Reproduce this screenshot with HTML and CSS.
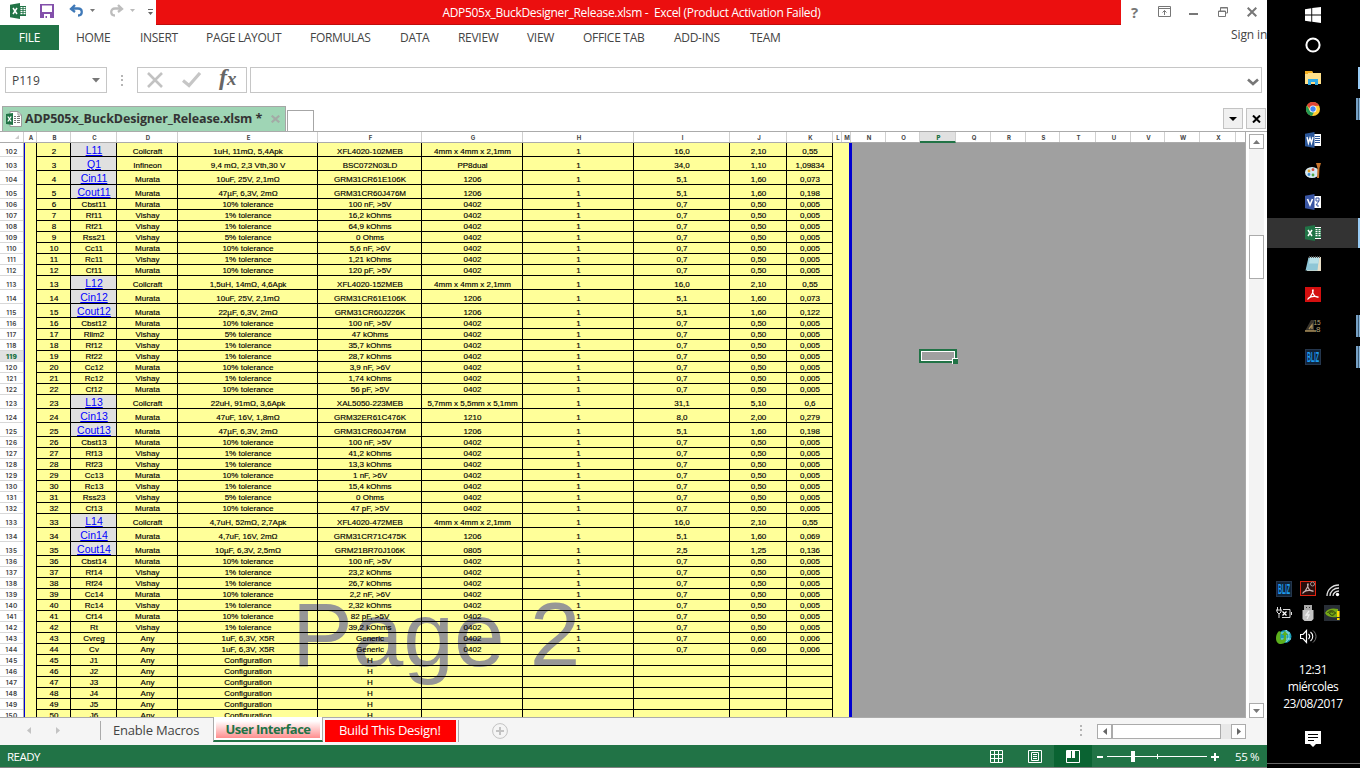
FILE: index.html
```html
<!DOCTYPE html>
<html lang="es">
<head>
<meta charset="utf-8">
<title>ADP505x_BuckDesigner_Release.xlsm - Excel</title>
<link rel="stylesheet" href="styles.css">
</head>
<body>
<svg class="defs" width="0" height="0">
  <defs>
    <symbol id="excel" viewBox="0 0 16 16"><rect x="9" y="2" width="7" height="12" fill="#fff"/><path d="M10 3h6v10h-6z" fill="#217346"/><path d="M10.500 4h2v1.200h-2zm3 0h2v1.200h-2zm-3 2h2v1.200h-2zm3 0h2v1.200h-2zm-3 2h2v1.200h-2zm3 0h2v1.200h-2zm-3 2h2v1.200h-2zm3 0h2v1.200h-2z" fill="#fff"/><path d="M0 1.800 10 0v16L0 14.200z" fill="#217346"/><path d="M3 5l4 6M7 5l-4 6" stroke="#fff" stroke-width="1.500"/></symbol>
    <symbol id="bliz" viewBox="0 0 16 16"><rect x=".5" y=".5" width="15" height="15" fill="#102338" stroke="#24364d"/><text x="2" y="13" textLength="12" lengthAdjust="spacingAndGlyphs" font-family="Liberation Sans" font-size="14" font-weight="bold" fill="#1e9cf0">BLIZ</text></symbol>
    <symbol id="pdf" viewBox="0 0 16 16"><path d="M7.500 2.500c2 0-1 7.500-5 10M7.500 3c0 5 3 7 6 7.500M3 11.500c3-2.500 7-2.500 10.500-1.500" fill="none" stroke="currentColor" stroke-width="1.200"/></symbol>
  </defs>
</svg>
<main class="excel">
  <header class="titlebar">
    <div class="quick">
      <svg class="q-logo" width="16" height="16"><use href="#excel"/></svg>
      <svg class="q-save" width="14" height="14" viewBox="0 0 14 14"><path fill="#8350ab" fill-rule="evenodd" d="M0 0h14v14H0zM2 1.500V8h10V1.500zM4 10v4h1.500v-2H7v2h3v-4z"/></svg>
      <svg class="q-undo" width="15" height="13" viewBox="0 0 15 13"><path d="M6 1 2 5l4 3M2 4.500h7c5 0 5 7 0 7" fill="none" stroke="#3f79b8" stroke-width="2.300"/></svg>
      <svg class="q-down" width="5" height="3" viewBox="0 0 5 3"><path d="M0 0h5L2.500 3z" fill="#777"/></svg>
      <svg class="q-redo" width="15" height="13" viewBox="0 0 15 13"><path d="M9 1l4 4-4 3M13 4.500H6c-5 0-5 7 0 7" fill="none" stroke="#bdbdbd" stroke-width="2.300"/></svg>
      <svg class="q-down" width="5" height="3" viewBox="0 0 5 3"><path d="M0 0h5L2.500 3z" fill="#bbb"/></svg>
      <svg class="q-more" width="5" height="6" viewBox="0 0 5 6"><path d="M0 0h5v1H0zM0 3h5L2.500 6z" fill="#666"/></svg>
    </div>
    <div class="title">ADP505x_BuckDesigner_Release.xlsm -&nbsp; Excel (Product Activation Failed)</div>
    <div class="winbtns">
      <b>?</b>
      <svg width="13" height="11" viewBox="0 0 13 11"><path d="M.5.500h12v10H.5zM.5 2.500h12M6.500 9V4.500M4.500 6.500l2-2 2 2" fill="none" stroke="#777"/></svg>
      <svg width="10" height="11" viewBox="0 0 10 11"><path d="M0 7h9v2H0z" fill="#777"/></svg>
      <svg width="10" height="10" viewBox="0 0 10 10"><path d="M.5 4h7v5.500h-7zM.5 4.500h7M2.500 4V.500h7v5.500h-2M2.500 1h7" fill="none" stroke="#777"/></svg>
      <svg width="10" height="10" viewBox="0 0 10 10"><path d="M.7.700l8.600 8.600M9.300.700L.7 9.300" stroke="#777" stroke-width="2"/></svg>
    </div>
  </header>
  <nav class="ribbon">
    <span class="file">FILE</span>
    <span>HOME</span><span>INSERT</span><span>PAGE LAYOUT</span><span>FORMULAS</span><span>DATA</span><span>REVIEW</span><span>VIEW</span><span>OFFICE TAB</span><span>ADD-INS</span><span>TEAM</span>
    <span class="signin">Sign in</span>
  </nav>
  <section class="formula">
    <div class="namebox"><span>P119</span><svg width="8" height="5" viewBox="0 0 8 5"><path d="M0 0h8L4 4.500z" fill="#777"/></svg></div>
    <i class="dots"></i>
    <div class="fx">
      <svg width="17" height="16" viewBox="0 0 17 16"><path d="M1 1l14 14M15 1L1 15" stroke="#c2c2c2" stroke-width="2.600"/></svg>
      <svg width="20" height="16" viewBox="0 0 20 16"><path d="M1 8.500l6 5L18 1" fill="none" stroke="#c6c6c6" stroke-width="3.200"/></svg>
      <em>f<small>x</small></em>
    </div>
    <div class="input"><svg width="12" height="8" viewBox="0 0 12 8"><path d="M1 1.500l5 4.500 5-4.500" fill="none" stroke="#777" stroke-width="2.600"/></svg></div>
  </section>
  <section class="doctabs">
    <div class="doctab">
      <svg width="16" height="16" viewBox="0 0 16 16"><path d="M4 .500h8l3.500 3.500v11.500H4z" fill="#fff" stroke="#999"/><path d="M12 .500V4h3.500" fill="none" stroke="#999"/><path d="M8 5h2v1H8zm3 0h3v1h-3zM8 7h2v1H8zm3 0h3v1h-3zM8 9h2v1H8zm3 0h3v1h-3zM8 11h2v1H8zm3 0h3v1h-3z" fill="#777"/><path d="M0 3l7-1v12l-7-1z" fill="#217346"/><path d="M1.800 5.500l3.400 5M5.200 5.500l-3.400 5" stroke="#fff" stroke-width="1.300"/></svg>
      <b>ADP505x_BuckDesigner_Release.xlsm *</b>
      <svg class="close" width="9" height="8" viewBox="0 0 9 8"><path d="M.7.700l7.600 6.600M8.300.700L.7 7.300" stroke="#a3aba6" stroke-width="2.200"/></svg>
    </div>
    <div class="newtab"></div>
    <div class="docbtn first"><svg width="8" height="4" viewBox="0 0 8 4"><path d="M0 0h8L4 4z"/></svg></div>
    <div class="docbtn"><svg width="9" height="8" viewBox="0 0 9 8"><path d="M1 .500l7 7M8 .500l-7 7" stroke="#000" stroke-width="2"/></svg></div>
  </section>
  <section class="sheet">
    <div class="pane">
      <div class="colheads" id="colheads"></div>
      <div class="body">
        <div class="rowheads" id="rowheads"></div>
        <div class="yellow">
          <div class="watermark">Page 2</div>
          <div class="rows" id="rows"></div>
        </div>
        <div class="gray"><i class="cursor"></i></div>
      </div>
    </div>
    <div class="vscroll">
      <div class="sbtn"><svg width="7" height="4" viewBox="0 0 7 4"><path d="M0 4h7L3.500 0z" fill="#777"/></svg></div>
      <div class="vthumb"></div>
      <div class="sbtn end"><svg width="7" height="4" viewBox="0 0 7 4"><path d="M0 0h7L3.500 4z" fill="#777"/></svg></div>
    </div>
  </section>
  <footer class="tabs">
    <div class="tabnav">
      <svg width="4" height="7" viewBox="0 0 4 7"><path d="M4 0v7L0 3.500z" fill="#c3c3c3"/></svg>
      <svg width="4" height="7" viewBox="0 0 4 7"><path d="M0 0v7l4-3.500z" fill="#c3c3c3"/></svg>
    </div>
    <div class="tab-plain">Enable Macros</div>
    <div class="tab-active"><b>User Interface</b></div>
    <div class="tab-red">Build This Design!</div>
    <svg class="plus" width="16" height="16" viewBox="0 0 16 16"><circle cx="8" cy="8" r="7.400" fill="none" stroke="#c3c3c3"/><path d="M8 4v8M4 8h8" stroke="#c3c3c3" stroke-width="2"/></svg>
    <i class="dots hdots"></i>
    <div class="hscroll">
      <div class="sbtn"><svg width="4" height="7" viewBox="0 0 4 7"><path d="M4 0v7L0 3.500z" fill="#666"/></svg></div>
      <div class="hthumb"></div>
      <div class="sbtn end"><svg width="4" height="7" viewBox="0 0 4 7"><path d="M0 0v7l4-3.500z" fill="#666"/></svg></div>
    </div>
  </footer>
  <footer class="status">
    <span class="ready">READY</span>
    <svg class="v1" width="13" height="13" viewBox="0 0 13 13"><path d="M.5.500h12v12H.5zM4.500 0v13M8.500 0v13M0 4.500h13M0 8.500h13" fill="none" stroke="#fff"/></svg>
    <svg class="v2" width="14" height="13" viewBox="0 0 14 13"><path d="M.5.500h13v12H.5zM3.500 2.500h7v8h-7zM5 4.500h4M5 6.500h4M5 8.500h4" fill="none" stroke="#fff"/></svg>
    <div class="v3"><svg width="14" height="13" viewBox="0 0 14 13"><path d="M.5.500h13v12H.5z" fill="none" stroke="#fff"/><path d="M1 0h4v8H1zM6 0h3v8H6z" fill="#fff"/></svg></div>
    <svg class="zoombar" width="123" height="13" viewBox="0 0 123 13"><path d="M0 6h6v2H0zM10 6h100v1H10zM34 1h4v11h-4zM60 4h1v5h-1zM114 6h8v2h-8zM117 3h2v8h-2z" fill="#fff"/></svg>
    <span class="pct">55 %</span>
  </footer>
</main>
<aside class="taskbar">
  <div class="slot"><svg width="16" height="16" viewBox="0 0 16 16"><path d="M0 2.200l6.300-1v6.300H0zM7.200 1.100L16 0v7.500H7.200zM0 8.400h6.300v6.300L0 13.800zM7.200 8.400H16V16l-8.800-1.200z" fill="#fff"/></svg></div>
  <div class="slot"><svg width="16" height="16" viewBox="0 0 16 16"><circle cx="8" cy="8" r="6.600" fill="none" stroke="#fff" stroke-width="2"/></svg></div>
  <div class="slot open gap"><svg width="16" height="14" viewBox="0 0 16 14"><path d="M0 0h7l1 2h8v11H0z" fill="#ffe08a"/><path d="M0 0h7l1 2H3v1H0z" fill="#f4ae1e"/><path d="M3 14V8h10v6h-3v-3H6v3z" fill="#30ace8"/></svg></div>
  <div class="slot multi"><svg width="16" height="16" viewBox="0 0 16 16"><circle cx="8" cy="8" r="7" fill="#fc3"/><path d="M1.900 4.500A7 7 0 0 1 14.100 4.700L8 5 6 9z" fill="#de4436"/><path d="M1.900 4.500L5 10l4 1-2 4A7 7 0 0 1 1.900 4.500z" fill="#239b56"/><circle cx="8" cy="8" r="3.500" fill="#fff"/><circle cx="8" cy="8" r="2.700" fill="#4285f4"/></svg></div>
  <div class="slot"><svg width="16" height="16" viewBox="0 0 16 16"><rect x="8" y="2" width="8" height="12" fill="#fff"/><path d="M10 4.500h5M10 6.500h5M10 8.500h5M10 10.500h5" stroke="#2b579a"/><path d="M0 1.800L9.500 0v16L0 14.200z" fill="#2b579a"/><path d="M2 5l1.400 6L5 6l1.500 5L8 5" fill="none" stroke="#fff" stroke-width="1.400"/></svg></div>
  <div class="slot"><svg width="16" height="16" viewBox="0 0 16 16"><ellipse cx="7" cy="9.500" rx="7" ry="5.500" fill="#d5e8f2"/><circle cx="4" cy="8" r="1.400" fill="#e2a32a"/><circle cx="8" cy="6.700" r="1.400" fill="#d64a36"/><circle cx="4" cy="11.500" r="1.400" fill="#3d8bd1"/><circle cx="8" cy="12" r="1.400" fill="#52a844"/><path d="M11 0h5l-1.500 5L14 15h-2l.500-10z" fill="#c8742c"/></svg></div>
  <div class="slot"><svg width="16" height="16" viewBox="0 0 16 16"><rect x="8" y="2" width="8" height="12" fill="#fff"/><path d="M11 4h3v3h-3zM14 7l-3 4h2v2" fill="none" stroke="#3955a3"/><path d="M0 1.800L9.500 0v16L0 14.200z" fill="#3955a3"/><path d="M2.500 5L5 11l2.500-6" fill="none" stroke="#fff" stroke-width="1.600"/></svg></div>
  <div class="slot current open"><svg width="16" height="16"><use href="#excel"/></svg></div>
  <div class="slot"><svg width="16" height="16" viewBox="0 0 16 16"><path d="M4 1h12v14H2z" fill="#e8dfc8"/><path d="M3.500 1.500H14l-1.500 13H.5z" fill="#8ec6d6"/><path d="M5 1.500h9l-.7 6H4z" fill="#b8e0e8"/><path d="M4 1h11" stroke="#555" stroke-width="2" stroke-dasharray="1 1"/></svg></div>
  <div class="slot"><svg class="pdf" width="16" height="16"><rect width="16" height="15" fill="#d40f0f"/><use href="#pdf"/></svg></div>
  <div class="slot multi"><svg width="16" height="14" viewBox="0 0 16 14"><path d="M0 12L6 1h3v11z" fill="#38342c"/><path d="M0 12h11M4 10l3-4v4" stroke="#a98f5a" fill="none" stroke-width="1.300"/><text x="8.500" y="5.500" font-family="Liberation Sans" font-size="6.500" fill="#b5a27a">15</text><text x="11" y="12.500" font-family="Liberation Sans" font-size="8" fill="#b5a27a">8</text></svg></div>
  <div class="slot multi"><svg width="16" height="16"><use href="#bliz"/></svg></div>
  <div class="tray">
    <svg width="16" height="16"><use href="#bliz"/></svg>
    <svg width="16" height="16" viewBox="0 0 16 16" class="trayred"><rect x=".5" y=".5" width="15" height="14" fill="#2a0d0b" stroke="#e0230f"/><use href="#pdf"/><circle cx="12.500" cy="3" r="2" fill="none" stroke="#999"/></svg>
    <svg width="16" height="16" viewBox="0 0 16 16"><path d="M3 15C3 9 8 4 15 4M6 15c0-4.500 4-8 9-8M9 15c0-3 3-5 6-5" fill="none" stroke="#ddd" stroke-width="1.300"/><circle cx="13.500" cy="13.500" r="1.700" fill="#fff"/></svg>
    <svg width="16" height="16" viewBox="0 0 16 16"><path d="M1.500 2v3M4.500 2v3M0 5h6M1 5v2l2 2 2-2V5M3 9v4M7 4.500h7v8H6M15.500 7v3" fill="none" stroke="#ddd"/><path d="M6.500 6.500l4 4M10.500 6.500l-4 4" stroke="#fff" stroke-width="1.300"/></svg>
    <svg width="16" height="16" viewBox="0 0 16 16"><path d="M4 0h8v5H4z" fill="#aaa"/><path d="M2.500 5h11v9l-2 2h-7l-2-2z" fill="#c4c4c4"/><path d="M6 2h1v1H6zm3 0h1v1H9z" fill="#333"/><path d="M9 6l-3 4h3l-2 4" fill="none" stroke="#eee" stroke-width="1.300"/></svg>
    <svg width="16" height="16" viewBox="0 0 16 16"><path d="M0 0h16v16H0z" fill="#282e36"/><path d="M1 8c3-5 8-5 13-4v8c-6 1-11 0-13-4z" fill="#76a916"/><path d="M3.500 8c2-3 6-3 8 0-2 3-5 3-6 0 1-2 3-1 4 0" fill="none" stroke="#24330c"/><path d="M13 6h2.500v6H13zm0 7h2.500v2H13z" fill="#ffe000"/></svg>
    <svg width="16" height="16" viewBox="0 0 16 16"><circle cx="9" cy="7.500" r="6.500" fill="#1a9db5"/><path d="M5 4h9M10 1c4 4 4 9 0 12M5 10h10M10 1v12" stroke="#8fe0e0" fill="none"/><path d="M0 9c0-3 1-5 3-7l2 1c-1 5-1 8 1 8s2-3 2-5H6l3-4 3 4h-2c1 6-1 9-5 9-3 0-5-2-5-6z" fill="#5caf1d"/></svg>
    <svg width="17" height="16" viewBox="0 0 17 16"><path d="M.5 5.500H3l3.500-4v12L3 9.500H.5z" fill="none" stroke="#fff" stroke-width="1.200"/><path d="M8.500 5c1.500 1.500 1.500 3.500 0 5M10.500 3c3 2.500 3 6.500 0 9" fill="none" stroke="#fff" stroke-width="1.100"/><path d="M13 1.500c4 3.500 4 8.500 0 12" fill="none" stroke="#777"/></svg>
  </div>
  <div class="clock"><span>12:31</span><span>miércoles</span><span>23/08/2017</span></div>
  <svg class="note" width="16" height="16" viewBox="0 0 16 16"><path d="M0 0h16v13h-5l-3 3-3-3H0z" fill="#fff"/><path d="M3 3.500h10M3 6.500h10M3 9.500h6" stroke="#000"/></svg>
  <div class="edge"></div>
</aside>
<script src="app.js"></script>
</body>
</html>
```
FILE: styles.css
```css
* { box-sizing: border-box; }
body { margin: 0; display: flex; width: 1360px; height: 768px; overflow: hidden; background: #fff; font: 12px "Open Sans", "Noto Sans", sans-serif; color: #444; }
svg { display: block; flex: none; }
.defs { position: absolute; }
.excel { width: 1267px; height: 768px; display: flex; flex-direction: column; }
.excel > * { flex: none; }

.titlebar { height: 25px; display: flex; }
.quick { width: 156px; flex: none; display: flex; align-items: flex-start; padding-left: 10px; }
.q-logo { margin-top: 3px; }
.q-save { margin: 4px 0 0 14px; }
.q-undo { margin: 4px 0 0 15px; }
.q-down { margin: 9px 0 0 6px; }
.q-redo { margin: 4px 0 0 14px; }
.q-more { margin: 9px 0 0 13px; }
.title { width: 965px; height: 25px; flex: none; background: #eb0f0f; border-bottom: 1px solid #c00c0c; color: #fff; text-align: center; line-height: 26px; letter-spacing: -0.32px; padding-right: 14px; white-space: nowrap; }
.winbtns { display: flex; align-items: center; padding-left: 10px; height: 23px; color: #777; }
.winbtns b { width: 10px; font-size: 15px; margin-right: 17px; flex: none; }
.winbtns svg { margin-right: 19px; }
.winbtns svg:nth-child(2) { margin-right: 18px; }
.winbtns svg:last-child { margin-right: 0; }

.ribbon { height: 25px; display: grid; grid-template-columns: 59px 17px 64px 66px 104px 90px 58px 69px 56px 91px 76px 481px 36px; line-height: 25px; letter-spacing: -0.3px; white-space: nowrap; }
.file { grid-column: 1 / 2; background: #217346; color: #fff; text-align: center; }
.ribbon span:nth-child(2) { grid-column: 3; }
.signin { line-height: 20px; letter-spacing: -0.1px; }

.formula { height: 55px; padding: 17px 5px 12px; display: flex; }
.namebox { width: 102px; height: 26px; border: 1px solid #c6c6c6; display: flex; align-items: center; justify-content: space-between; padding: 0 6px; }
.dots { width: 2px; height: 11px; margin: 8px 14px 0 14px; background: repeating-linear-gradient(#b5b5b5 0 2px, transparent 2px 4.500px); }
.fx { width: 110px; height: 26px; border: 1px solid #c6c6c6; display: flex; align-items: center; padding-left: 9px; }
.fx svg + svg { margin-left: 18px; }
.fx em { font: italic bold 24px/22px "Liberation Serif", serif; color: #666; margin: -5px 0 0 17px; }
.fx small { font-size: 19px; letter-spacing: -1px; }
.input { width: 1012px; height: 26px; margin-left: 3px; border: 1px solid #c6c6c6; display: flex; justify-content: flex-end; align-items: center; padding: 3px 2px 0 0; }

.doctabs { height: 26px; display: flex; align-items: flex-end; padding-left: 2px; }
.doctab { width: 284px; height: 25px; background: #9fd5b5; border: 1px solid #a6a6a6; border-bottom: 0; display: flex; align-items: center; padding-left: 3px; color: #333; font-size: 12.500px; white-space: nowrap; }
.doctab b { width: 244px; margin: -2px 0 0 3px; letter-spacing: -0.13px; }
.close { margin-left: 2px; }
.newtab { width: 27px; height: 21px; margin-left: 1px; border: 1px solid #a6a6a6; border-bottom: 0; }
.docbtn { width: 20px; height: 21px; margin: 0 0 2px 3px; background: #f0f0f0; border: 1px solid #c3c3c3; display: flex; align-items: center; justify-content: center; }
.docbtn.first { margin-left: 909px; }

.sheet { height: 587px; border-top: 1px solid #ababab; display: flex; }
.pane { width: 1246px; border-right: 1px solid #ababab; border-bottom: 1px solid #ababab; display: flex; flex-direction: column; }
.colheads { height: 11px; display: flex; border-bottom: 1px solid #ababab; font: bold 6px/11px Inter, sans-serif; }
.colheads span { border-right: 1px solid #d0d0d0; padding-left: 2px; text-align: center; overflow: hidden; flex: none; }
.colheads .on { background: #e1e1e1; color: #217346; border-bottom: 2px solid #217346; height: 11px; font-weight: 900; }
.colheads .corner { display: flex; justify-content: flex-end; align-items: flex-end; padding: 0 4px 3px 0; }
.body { height: 574px; display: flex; overflow: hidden; }
.rowheads { width: 24px; border-right: 1px solid #ababab; font: 600 6.500px Inter, sans-serif; letter-spacing: .3px; flex: none; overflow: hidden; }
.rowheads span { display: flex; align-items: flex-end; justify-content: center; height: 11px; border-bottom: 1px solid #d8d8d8; line-height: 8px; }
.rowheads .tall { height: 14px; }
.rowheads .on { background: #e1e1e1; color: #217346; font-weight: 900; }
.yellow { width: 828px; position: relative; background: #ffff99; border-left: 1px solid #0000d8; border-right: 3px solid #0000d0; flex: none; }
.rows { position: relative; width: 797px; margin-left: 11px; border-left: 1px solid #000; }
.watermark { position: absolute; left: 267px; top: 442px; font: 91px/100px "Liberation Sans", Arial, sans-serif; color: #969696; white-space: nowrap; }
.row { display: grid; grid-template-columns: 34px 46px 61px 140px 104px 101px 111px 96px 57px 46px; height: 11px; font: 8px/11px "Liberation Sans", Arial, sans-serif; color: #000; text-align: center; -webkit-text-stroke: .15px #000; white-space: nowrap; }
.row span { border-right: 1px solid #000; border-bottom: 1px solid #000; padding-left: 1px; overflow: hidden; }
.row.tall { height: 14px; line-height: 17px; }
.row.tall .ref { background: #e0e0e0; color: #0000ff; font-size: 10.500px; line-height: 14px; text-decoration: underline; -webkit-text-stroke: 0; }
.gray { flex: 1; background: #a0a0a0; position: relative; }
.cursor { position: absolute; left: 67px; top: 206px; width: 38px; height: 14px; border: 2px solid #217346; box-shadow: inset 0 0 0 1px #fff; }
.cursor::after { content: ""; position: absolute; right: -3px; bottom: -3px; width: 5px; height: 5px; background: #217346; border: solid #fff; border-width: 1px 0 0 1px; }
.vscroll { width: 15px; margin: 2px 0 0 3px; height: 584px; background: #f3f3f3; display: flex; flex-direction: column; }
.sbtn { width: 15px; height: 15px; border: 1px solid #ababab; background: #fff; display: flex; align-items: center; justify-content: center; flex: none; }
.vthumb { height: 44px; margin-top: 86px; background: #fff; border: 1px solid #ababab; }
.vscroll .end { margin-top: 424px; }

.tabs { height: 27px; background: #f5f5f5; display: flex; }
.tabnav { width: 101px; height: 19px; margin-top: 3px; padding-left: 27px; border-right: 1px solid #ababab; display: flex; align-items: center; gap: 25px; }
.tab-plain { width: 112px; padding-left: 12px; font-size: 13px; line-height: 25px; letter-spacing: -0.2px; white-space: nowrap; }
.tab-active { width: 110px; height: 25px; margin-top: -1px; padding: 4px 2px 2px; background: #fff; border: solid #ababab; border-width: 0 1px; border-bottom: 2px solid #217346; }
.tab-active b { display: block; height: 17px; background: linear-gradient(#fff, #ff8e8e); color: #217346; font-size: 13px; line-height: 17px; letter-spacing: -0.55px; text-align: center; white-space: nowrap; }
.tab-red { width: 136px; height: 22px; margin-top: 2px; border-right: 1px solid #ababab; background: linear-gradient(#f00, #f00) 2px 0 / 131px 22px no-repeat; color: #fff; padding-left: 16px; font-size: 13px; line-height: 21px; letter-spacing: -0.3px; white-space: nowrap; }
.plus { margin: 5px 0 0 33px; }
.hdots { margin: 7px 15px 0 572px; flex: none; }
.hscroll { width: 149px; height: 15px; margin-top: 6px; background: #e8e8e8; display: flex; }
.hthumb { width: 110px; margin-left: -1px; background: #fff; border: 1px solid #ababab; border-left-width: 2px; }
.hscroll .end { margin-left: 10px; }

.status { height: 23px; background: #217346; border-bottom: 1px solid #808080; color: #fff; display: flex; align-items: center; }
.ready { width: 983px; padding-left: 7px; font-size: 11.500px; letter-spacing: -0.5px; }
.v1 { margin-left: 7px; }
.v2 { margin-left: 25px; }
.v3 { width: 38px; height: 22px; margin-left: 12px; background: #0a6332; display: flex; align-items: center; padding-left: 12px; }
.zoombar { margin-left: 5px; }
.pct { margin-left: 15px; font-size: 11.500px; letter-spacing: -0.4px; white-space: nowrap; }

.taskbar { width: 93px; height: 768px; background: #000; display: flex; flex-direction: column; color: #fff; }
.slot { height: 30px; padding-right: 1px; display: flex; align-items: center; justify-content: center; flex: none; position: relative; }
.slot.gap { margin-top: 3px; }
.slot.gap ~ .slot { margin-top: 1px; }
.slot.current { background: #333; }
.slot.open::after { content: ""; position: absolute; right: 0; top: 4px; width: 2px; height: 22px; background: #99ccf5; }
.slot.current::after { top: 0; height: 30px; }
.slot.multi::after { content: ""; position: absolute; right: 0; top: 4px; width: 4px; height: 22px; background: linear-gradient(90deg, #76a0c4 2px, #3c5a73 2px 3px, #86b4da 3px); }
.pdf { color: #fff; }
.trayred { color: #c9b6b4; }
.tray { margin: 209px 0 0 9px; display: grid; grid-template-columns: repeat(3, 24px); grid-auto-rows: 24px; }
.clock { margin-top: 8px; padding-right: 1px; display: flex; flex-direction: column; align-items: center; font-size: 12px; line-height: 17px; letter-spacing: -0.4px; }
.note { margin: 19px 0 0 38px; }
.edge { margin-top: auto; margin-bottom: 4px; height: 1px; background: #666; flex: none; }
```
FILE: app.js
```javascript
const heads = [["A", 13], ["B", 34], ["C", 46], ["D", 61], ["E", 140], ["F", 104], ["G", 101], ["H", 111], ["I", 96], ["J", 57], ["K", 46], ["L", 9], ["M", 9], ["N", 35], ["O", 34], ["P", 36], ["Q", 35], ["R", 35], ["S", 34], ["T", 36], ["U", 35], ["V", 34], ["W", 35], ["X", 36]];
document.getElementById("colheads").innerHTML =
  '<span class="corner" style="width:24px"><svg width="4" height="4" viewBox="0 0 4 4"><path d="M4 0v4H0z" fill="#ccc"/></svg></span>' +
  heads.map(([n, w]) => `<span class="${n === "P" ? "on" : ""}" style="width:${w}px">${n}</span>`).join("");

const M = "Murata", V = "Vishay", C = "Coilcraft";
const big = "4mm x 4mm x 2,1mm";
const t10 = "10% tolerance", t1 = "1% tolerance", t5 = "5% tolerance";
// Full rows: ref, maker, description, part, package, area, height, cost.
// Short rows omit the package and use the 0402 defaults.
const parts = [
  ["L11", C, "1uH, 11mΩ, 5,4Apk", "XFL4020-102MEB", big, "16,0", "2,10", "0,55"],
  ["Q1", "Infineon", "9,4 mΩ, 2,3 Vth,30 V", "BSC072N03LD", "PP8dual", "34,0", "1,10", "1,09834"],
  ["Cin11", M, "10uF, 25V, 2,1mΩ", "GRM31CR61E106K", "1206", "5,1", "1,60", "0,073"],
  ["Cout11", M, "47µF, 6,3V, 2mΩ", "GRM31CR60J476M", "1206", "5,1", "1,60", "0,198"],
  ["Cbst11", M, t10, "100 nF, >5V"], ["Rf11", V, t1, "16,2 kOhms"], ["Rf21", V, t1, "64,9 kOhms"], ["Rss21", V, t5, "0 Ohms"],
  ["Cc11", M, t10, "5,6 nF, >6V"], ["Rc11", V, t1, "1,21 kOhms"], ["Cf11", M, t10, "120 pF, >5V"],
  ["L12", C, "1,5uH, 14mΩ, 4,6Apk", "XFL4020-152MEB", big, "16,0", "2,10", "0,55"],
  ["Cin12", M, "10uF, 25V, 2,1mΩ", "GRM31CR61E106K", "1206", "5,1", "1,60", "0,073"],
  ["Cout12", M, "22µF, 6,3V, 2mΩ", "GRM31CR60J226K", "1206", "5,1", "1,60", "0,122"],
  ["Cbst12", M, t10, "100 nF, >5V"], ["Rlim2", V, t5, "47 kOhms"], ["Rf12", V, t1, "35,7 kOhms"], ["Rf22", V, t1, "28,7 kOhms"],
  ["Cc12", M, t10, "3,9 nF, >6V"], ["Rc12", V, t1, "1,74 kOhms"], ["Cf12", M, t10, "56 pF, >5V"],
  ["L13", C, "22uH, 91mΩ, 3,6Apk", "XAL5050-223MEB", "5,7mm x 5,5mm x 5,1mm", "31,1", "5,10", "0,6"],
  ["Cin13", M, "47uF, 16V, 1,8mΩ", "GRM32ER61C476K", "1210", "8,0", "2,00", "0,279"],
  ["Cout13", M, "47µF, 6,3V, 2mΩ", "GRM31CR60J476M", "1206", "5,1", "1,60", "0,198"],
  ["Cbst13", M, t10, "100 nF, >5V"], ["Rf13", V, t1, "41,2 kOhms"], ["Rf23", V, t1, "13,3 kOhms"], ["Cc13", M, t10, "1 nF, >6V"],
  ["Rc13", V, t1, "15,4 kOhms"], ["Rss23", V, t5, "0 Ohms"], ["Cf13", M, t10, "47 pF, >5V"],
  ["L14", C, "4,7uH, 52mΩ, 2,7Apk", "XFL4020-472MEB", big, "16,0", "2,10", "0,55"],
  ["Cin14", M, "4,7uF, 16V, 2mΩ", "GRM31CR71C475K", "1206", "5,1", "1,60", "0,069"],
  ["Cout14", M, "10µF, 6,3V, 2,5mΩ", "GRM21BR70J106K", "0805", "2,5", "1,25", "0,136"],
  ["Cbst14", M, t10, "100 nF, >5V"], ["Rf14", V, t1, "23,2 kOhms"], ["Rf24", V, t1, "26,7 kOhms"], ["Cc14", M, t10, "2,2 nF, >6V"],
  ["Rc14", V, t1, "2,32 kOhms"], ["Cf14", M, t10, "82 pF, >5V"], ["Rt", V, t1, "39,2 kOhms"],
  ["Cvreg", "Any", "1uF, 6,3V, X5R", "Generic", "0402", "0,7", "0,60", "0,006"],
  ["Cv", "Any", "1uF, 6,3V, X5R", "Generic", "0402", "0,7", "0,60", "0,006"]
];
for (let j = 1; j <= 6; j++) parts.push(["J" + j, "Any", "Configuration", "H", "", "", "", ""]);

let rowHtml = "", headHtml = "";
parts.forEach((p, i) => {
  const n = 102 + i;
  const tall = /^(L1|Q1|Cin|Cout)/.test(p[0]) ? "tall" : "";
  const rest = p.length > 4 ? p.slice(4) : ["0402", "0,7", "0,50", "0,005"];
  const qty = rest[0] ? "1" : "";
  const cells = [p[1], p[2], p[3], rest[0], qty, rest[1], rest[2], rest[3]];
  rowHtml += `<div class="row ${tall}"><span>${i + 2}</span><span class="ref">${p[0]}</span>` +
    cells.map(c => `<span>${c.replace(">", "&gt;")}</span>`).join("") + "</div>";
  headHtml += `<span class="${tall} ${n === 119 ? "on" : ""}">${n}</span>`;
});
document.getElementById("rows").innerHTML = rowHtml;
document.getElementById("rowheads").innerHTML = headHtml;
```
